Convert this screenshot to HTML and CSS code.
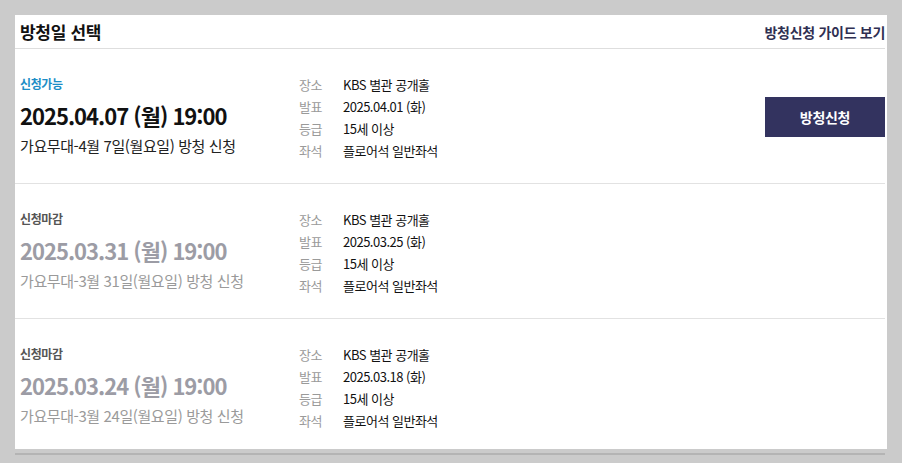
FILE: index.html
```html
<!DOCTYPE html>
<html lang="ko">
<head>
  <meta charset="UTF-8" />
  <meta name="viewport" content="width=device-width, initial-scale=1.0" />
  <title>방청일 선택</title>
  <link rel="stylesheet" href="styles.css">
</head>
<body>

<div class="panel">
  <div class="head">
    <h2>방청일 선택</h2>
    <a href="#guide" class="guide">방청신청 가이드 보기</a>
  </div>

  <!-- 방청일 목록 -->
  <div class="row">
    <div class="main">
      <p class="state on">신청가능</p>
      <p class="date">2025.04.07 (월) 19:00</p>
      <p class="sub">가요무대-4월 7일(월요일) 방청 신청</p>
    </div>
    <dl class="info">
      <dt>장소</dt><dd>KBS 별관 공개홀</dd>
      <dt>발표</dt><dd>2025.04.01 (화)</dd>
      <dt>등급</dt><dd>15세 이상</dd>
      <dt>좌석</dt><dd>플로어석 일반좌석</dd>
    </dl>
    <a href="#apply" class="btn">방청신청</a>
  </div>

  <div class="row closed">
    <div class="main">
      <p class="state">신청마감</p>
      <p class="date">2025.03.31 (월) 19:00</p>
      <p class="sub">가요무대-3월 31일(월요일) 방청 신청</p>
    </div>
    <dl class="info">
      <dt>장소</dt><dd>KBS 별관 공개홀</dd>
      <dt>발표</dt><dd>2025.03.25 (화)</dd>
      <dt>등급</dt><dd>15세 이상</dd>
      <dt>좌석</dt><dd>플로어석 일반좌석</dd>
    </dl>
  </div>

  <div class="row closed last">
    <div class="main">
      <p class="state">신청마감</p>
      <p class="date">2025.03.24 (월) 19:00</p>
      <p class="sub">가요무대-3월 24일(월요일) 방청 신청</p>
    </div>
    <dl class="info">
      <dt>장소</dt><dd>KBS 별관 공개홀</dd>
      <dt>발표</dt><dd>2025.03.18 (화)</dd>
      <dt>등급</dt><dd>15세 이상</dd>
      <dt>좌석</dt><dd>플로어석 일반좌석</dd>
    </dl>
  </div>
</div>
<div class="shadow"></div>

</body>
</html>
```

FILE: styles.css
```css
body { margin: 0; padding: 15px 15px 0; background: #cbcbcb; font-family: "Noto Sans CJK KR", "Noto Sans", sans-serif; color: #111; }
p, h2, dl, dd { margin: 0; }
.panel { width: 870px; padding-right: 2px; background: #fff; }
.head { display: flex; justify-content: space-between; align-items: center; height: 33px; border-bottom: 1px solid #dedede; padding: 0 0 0 5px; }
.head h2 { font-size: 17px; font-weight: bold; letter-spacing: -0.3px; color: #111; }
.guide { font-size: 14px; font-weight: bold; color: #2f2f52; text-decoration: none; letter-spacing: -0.3px; }
.row { display: flex; align-items: flex-start; padding: 24px 0 22px 5px; border-bottom: 1px solid #e2e2e2; }
.row.last { border-bottom: none; height: 84px; }
.main { width: 279px; }
.state { font-size: 12px; font-weight: bold; line-height: 22px; color: #555; letter-spacing: -0.4px; }
.state.on { color: #1c8dc6; }
.date { font-size: 22px; font-weight: bold; line-height: 32px; margin-top: 4px; letter-spacing: -1px; }
.sub { font-size: 15px; line-height: 22px; margin-top: 4px; letter-spacing: -0.4px; color: #222; }
.closed .date { color: #9c9ca5; }
.closed .sub { color: #9a9a9a; }
.info { display: grid; grid-template-columns: 44px auto; grid-auto-rows: 22px; align-items: center; font-size: 13px; letter-spacing: -0.5px; flex: 1; }
.info dt { color: #9a9a9a; }
.info dd { color: #111; }
.btn { display: flex; align-items: center; justify-content: center; width: 120px; height: 40px; margin-top: 24px; background: #33335f; color: #fff; font-size: 14px; font-weight: bold; text-decoration: none; letter-spacing: -0.3px; }
.shadow { width: 870px; height: 2px; margin-top: 4px; background: #b4b4b4; }
```
